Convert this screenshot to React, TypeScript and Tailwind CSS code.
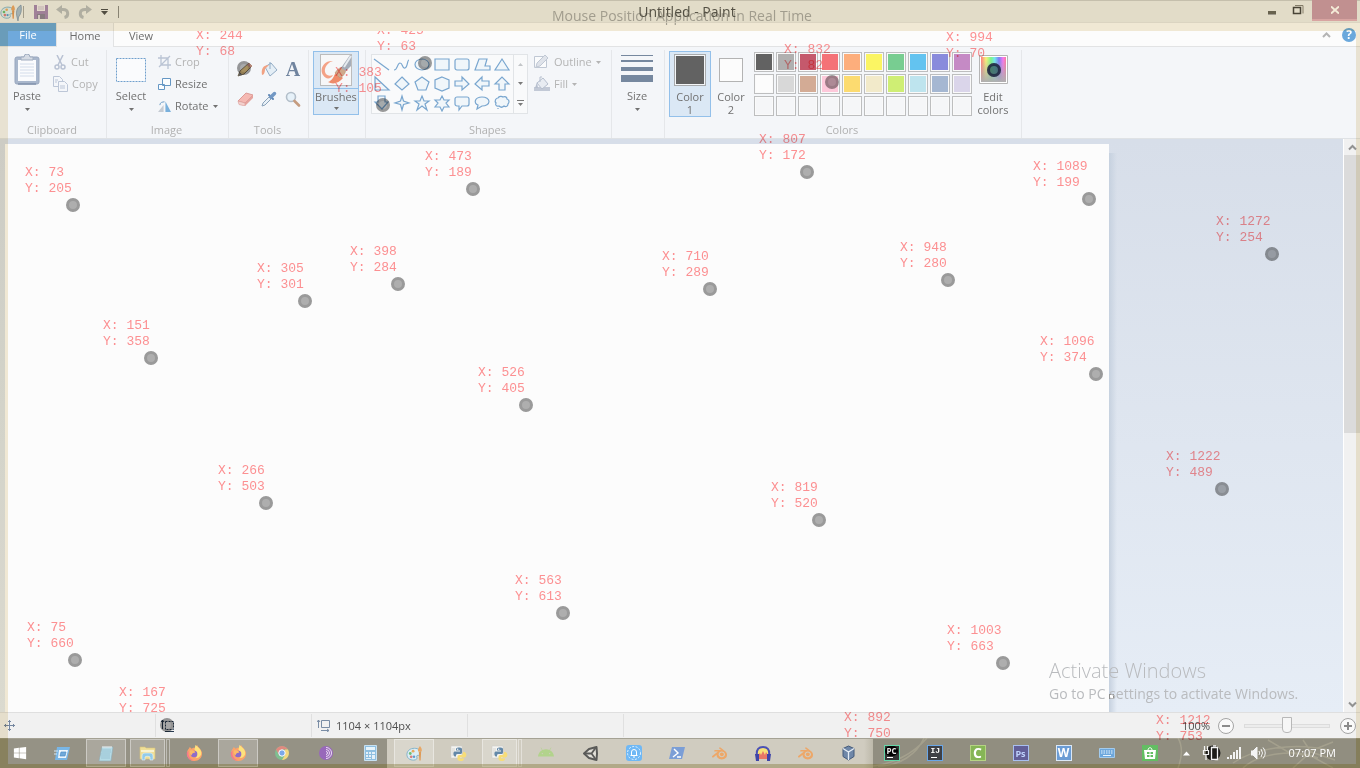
import type { ReactNode } from "react";
import { FaAndroid, FaWindows } from "react-icons/fa";
import { SiBlender } from "react-icons/si";

type Point = { x: number; y: number; dot?: boolean };

const points: Point[] = [
  { x: 244, y: 68 }, { x: 425, y: 63 }, { x: 383, y: 105 }, { x: 832, y: 82 },
  { x: 994, y: 70 }, { x: 73, y: 205 }, { x: 473, y: 189 }, { x: 807, y: 172 },
  { x: 1089, y: 199 }, { x: 1272, y: 254 }, { x: 398, y: 284 }, { x: 305, y: 301 },
  { x: 710, y: 289 }, { x: 948, y: 280 }, { x: 151, y: 358 }, { x: 1096, y: 374 },
  { x: 526, y: 405 }, { x: 1222, y: 489 }, { x: 266, y: 503 }, { x: 819, y: 520 },
  { x: 563, y: 613 }, { x: 75, y: 660 }, { x: 1003, y: 663 }, { x: 167, y: 725 },
  { x: 892, y: 750, dot: false }, { x: 1212, y: 753, dot: false },
];

const TOP = 31;

function Markers() {
  return (
    <div className="pointer-events-none absolute inset-x-0 bottom-0 top-[31px] overflow-hidden mix-blend-multiply">
      {points.map((p) => {
        const chars = 3 + Math.max(String(p.x).length, String(p.y).length);
        return (
          <div key={`${p.x}-${p.y}`}>
            <div
              className="absolute whitespace-pre font-['Liberation_Mono',monospace] text-[13px] leading-4 text-[#ff9294]"
              style={{ left: p.x - chars * 8, top: p.y - 40 - TOP }}
            >
              {`X: ${p.x}\nY: ${p.y}`}
            </div>
            {p.dot !== false && (
              <div
                className="absolute size-[14px] rounded-full border-[3px] border-[#9c9c9c] bg-[#b0b0b0]"
                style={{ left: p.x - 7, top: p.y - 7 - TOP }}
              />
            )}
          </div>
        );
      })}
    </div>
  );
}

function Caret({ className = "" }: { className?: string }) {
  return (
    <svg className={className} width="5" height="3" viewBox="0 0 5 3" fill="currentColor" aria-hidden="true">
      <path d="M0 0h5L2.5 3z" />
    </svg>
  );
}

/* ---------- title bar ---------- */

function PaletteIcon({ size = 18 }: { size?: number }) {
  return (
    <svg width={size} height={size} viewBox="0 0 18 18" aria-hidden="true">
      <path d="M1 10c0-4 3.500-6.500 8-6.500 4 0 6.500 2 6.500 5 0 2-1.500 2.500-3 2.500-1.500 0-1.500 1-1 2 .5 1.500-.5 3-3.500 3C4 16 1 14 1 10z" fill="#dcedf5" stroke="#7fb0c8" />
      <circle cx="4.500" cy="9" r="1.500" fill="#6fbf73" />
      <circle cx="7.500" cy="6.500" r="1.500" fill="#e9aa5d" />
      <circle cx="5.500" cy="12.500" r="1.500" fill="#d98080" />
      <circle cx="8.500" cy="12.500" r="1.300" fill="#5f9bd0" />
      <path d="M13.500 7h2.500l-.5 9.500h-1.300z" fill="#e09a56" />
      <path d="M12.800 7c-.5-2 .3-4 2-6 1.700 2 2.300 4 1.700 6z" fill="#e8a765" />
    </svg>
  );
}

function TitleBar() {
  return (
    <header className="relative flex h-[23px] shrink-0 items-center bg-[#eeefed] shadow-[inset_0_1px_0_#cfd0cc]">
      <div className="flex items-center">
        <div className="flex w-[23px] items-center">
          <PaletteIcon size={16} />
          <svg width="6" height="18" viewBox="0 0 6 18" aria-hidden="true">
            <path d="M5 2C0 5 0 10 1 14l1 4 .6-4c2.500-3 3.400-7 2.400-12z" fill="#a9bfd2" stroke="#6e88a2" strokeWidth=".6" />
          </svg>
        </div>
        <span className="h-3 w-px bg-[#aaa9a4]" />
        <button aria-label="Save" className="ml-[10px] flex w-[14px]">
          <svg width="14" height="14" viewBox="0 0 14 14" aria-hidden="true">
            <path d="M0 0h14v14H0z" fill="#a88bb4" />
            <path d="M3 0h8v6H3z" fill="#f0ecf2" />
            <path d="M4 2h6M4 4h6" stroke="#c9bfd0" />
            <path d="M3 9h8v5H3z" fill="#8f8598" />
            <path d="M4 10h2v4H4z" fill="#ded8e2" />
          </svg>
        </button>
        <button aria-label="Undo" className="ml-2">
          <svg width="14" height="14" viewBox="0 0 14 14" fill="none" aria-hidden="true">
            <path d="M4 4.500h3c6 0 6 7 1.500 8" stroke="#b9bdbf" strokeWidth="3" />
            <path d="M0 4.500L6 0v9z" fill="#b9bdbf" />
          </svg>
        </button>
        <button aria-label="Redo" className="ml-2">
          <svg width="14" height="14" viewBox="0 0 14 14" fill="none" aria-hidden="true">
            <path d="M10 4.500H7c-6 0-6 7-1.500 8" stroke="#b9bdbf" strokeWidth="3" />
            <path d="M14 4.500L8 0v9z" fill="#b9bdbf" />
          </svg>
        </button>
        <button aria-label="Customize Quick Access Toolbar" className="ml-[9px] flex flex-col items-center gap-px text-[#55534d]">
          <span className="h-px w-[7px] bg-[#55534d]" />
          <svg width="7" height="4" viewBox="0 0 7 4" fill="currentColor" aria-hidden="true"><path d="M0 0h7L3.500 4z" /></svg>
        </button>
        <span className="ml-[10px] h-3 w-px bg-[#8f8e88]" />
      </div>
      <div className="pointer-events-none absolute inset-x-0 top-[6px] pl-1 text-center text-[14px] leading-[20px] text-[#a9aaa8]">
        Mouse Position Application in Real Time
      </div>
      <h1 className="pointer-events-none absolute inset-x-0 top-[2px] pl-[14px] text-center text-[14px] leading-[20px] text-[#57564f]">
        Untitled - Paint
      </h1>
      <div className="relative ml-auto flex h-full items-start pr-[3px]">
        <button aria-label="Minimize" className="flex h-4 w-[22px] items-end justify-center pb-[1px]">
          <span className="h-1 w-2 border-b border-[#a8a8a8] bg-[#6d6a5c]" />
        </button>
        <button aria-label="Restore" className="flex h-5 w-[29px] items-center justify-center">
          <svg width="12" height="12" viewBox="0 0 12 12" fill="none" aria-hidden="true">
            <path d="M3 1.500h8v8" stroke="#8b887c" />
            <path d="M1.500 3.500h7v6h-7z" stroke="#4c4a40" strokeWidth="1.500" />
          </svg>
        </button>
        <button aria-label="Close" className="flex h-[21px] w-[45px] items-center justify-center border-b-2 border-[#e3b2bf] bg-[#cb9cab]">
          <svg width="8" height="8" viewBox="0 0 8 8" aria-hidden="true"><path d="M0 .5l8 7M8 .5l-8 7" stroke="#fff" strokeWidth="2" /></svg>
        </button>
      </div>
    </header>
  );
}

function Tabs() {
  return (
    <nav className="flex h-6 shrink-0 items-stretch border-b border-[#e2e3e4] bg-[#fcfcfc] text-[11px] leading-4">
      <button className="w-14 bg-[#6fa9dc] pt-px text-white">File</button>
      <button className="z-10 -mb-px w-[58px] border-x border-[#e2e3e4] bg-[#f6f7f9] pt-[2px] text-[#6c6c6c]">Home</button>
      <button className="w-[54px] pt-[2px] text-[#6c6c6c]">View</button>
      <div className="ml-auto flex items-center gap-[11px] pr-1">
        <button aria-label="Minimize the Ribbon">
          <svg width="9" height="6" viewBox="0 0 9 6" fill="none" aria-hidden="true"><path d="M1 5l3.500-3.500L8 5" stroke="#b4b4b4" strokeWidth="2" /></svg>
        </button>
        <button aria-label="Help" className="size-[14px] rounded-full bg-[#6aa8dc] text-[12px] font-bold leading-[14px] text-white">?</button>
      </div>
    </nav>
  );
}

/* ---------- ribbon ---------- */

function Group({ label, className, children }: { label?: string; className: string; children: ReactNode }) {
  return (
    <section className={`relative flex shrink-0 flex-col border-r border-[#e5e7ea] ${className}`}>
      <div className="flex h-[72px] items-start">{children}</div>
      <div className="pr-[2px] text-center text-[11px] leading-4 text-[#b1b1b1]">{label}</div>
    </section>
  );
}

function PasteIcon() {
  return (
    <svg width="26" height="32" viewBox="0 0 26 32" aria-hidden="true">
      <rect x="1" y="3" width="24" height="27" rx="2" fill="#a9b7cc" stroke="#98a7be" />
      <path d="M4 6h18v21H4z" fill="#fafbfd" />
      <path d="M6 10h14M6 13h14M6 16h14M6 19h14M6 22h14" stroke="#d3dcea" />
      <path d="M7 6V3h3a3 3 0 016 0h3v3z" fill="#d5dbe4" stroke="#9facbf" />
      <path d="M4 30h18" stroke="#8393ad" strokeWidth="1.500" />
    </svg>
  );
}

function BrushIcon() {
  return (
    <svg width="32" height="32" viewBox="0 0 32 32" aria-hidden="true">
      <rect x=".5" y=".5" width="31" height="31" fill="#f7f7f8" stroke="#bcbcbc" />
      <path d="M13 7C4 6-1 15 3 21c3 5 8 4 10 0-5 2-9-1-8-6 1-4 4-7 8-8z" fill="#f4a286" />
      <path d="M8 28c4-1 6-6 8-10l7 6c-4 5-10 7-15 4z" fill="#ee8b6a" />
      <path d="M15 19c3-5 7-7 10-5 2 3-1 8-5 10z" fill="#cfa98b" stroke="#b58f73" strokeWidth=".5" />
      <path d="M21 14L30 1h1v11l-5 5z" fill="#a5adb9" />
      <path d="M24 13l7-11" stroke="#e7ebf0" strokeWidth="2" />
    </svg>
  );
}

const shapePaths = [
  "M1 3l15 11",
  "M1 14C5 14 4 7 7 7s2 6 5 5 2-8 4-8",
  "M9 3c4 0 7 2.500 7 5.500S13 14 9 14s-7-2.500-7-5.500S5 3 9 3z",
  "M2 3h14v11H2z",
  "M4 3h10a2 2 0 012 2v7a2 2 0 01-2 2H4a2 2 0 01-2-2V5a2 2 0 012-2z",
  "M6 3h8l-2 7h5v4H2z",
  "M9 3l7 11H2z",
  "M2 2v13h14z",
  "M9 2l7 7-7 6-7-6z",
  "M9 2l7 5-3 8H5L2 7z",
  "M9 2l7 3v8l-7 3-7-3V5z",
  "M2 6h7V2l7 7-7 6v-4H2z",
  "M16 6H9V2L2 9l7 6v-4h7z",
  "M6 15V9H2l7-7 7 7h-4v6z",
  "M5 2v6H2l7 7 6-7h-3V2z",
  "M9 2l1.500 5L16 9l-5.500 1.500L9 16l-1.500-5.500L2 9l5.500-2z",
  "M9 2l2 5h5l-4 3 2 6-5-4-5 4 2-6-4-3h5z",
  "M9 2l2 4h5l-3 3 3 4h-5l-2 4-2-4H2l3-4-3-3h5z",
  "M4 3h10a2 2 0 012 2v5a2 2 0 01-2 2H9l-3 4v-4H4a2 2 0 01-2-2V5a2 2 0 012-2z",
  "M9 3c4 0 7 2 7 4.500S13 12 9 12l-5 3 1-4C0 9 2 3 9 3z",
  "M5 4c1-2 4-2 5-1 2-1 4 0 4 2 3 1 2 4 1 5 0 3-3 3-4 2-2 2-4 1-5 0-3 1-4-2-3-3-2-2 0-5 2-5zM5 14v1",
];

const paletteTop = ["#626262", "#b0b0b0", "#c5596c", "#f47277", "#fdae7c", "#fbf563", "#78cd91", "#63c3f0", "#898bdc", "#c58ac5"];
const paletteBottom = ["#fcfcfc", "#d8d8d8", "#d3ab95", "#fdc8da", "#fcdb70", "#f2eaca", "#cfee74", "#bee4ee", "#a5b7d2", "#dad5ea"];
const paletteCells = [...paletteTop, ...paletteBottom, ...Array<string>(10).fill("#f5f6f8")];

const disabled = "text-[#b4b4b4]";

function Ribbon() {
  return (
    <div className="flex h-[92px] shrink-0 border-b border-[#dfe2e5] bg-[#f4f6f9] pt-[3px] text-[12px] leading-4 text-[#717171]">
      <Group label="Clipboard" className="w-[107px]">
        <button className="ml-[13px] mt-1 flex w-7 flex-col items-center text-[11px]">
          <PasteIcon />
          <span className="mt-[2px]">Paste</span>
          <Caret className="mt-1" />
        </button>
        <div className={`ml-3 mt-1 flex flex-col gap-[6px] text-[11px] ${disabled}`}>
          <button className="flex items-center gap-1">
            <svg width="14" height="15" viewBox="0 0 14 15" fill="none" stroke="#b9c2d3" strokeWidth="1.500" aria-hidden="true">
              <path d="M4 0l5 10M10 0L5 10" /><circle cx="4" cy="12" r="2" /><circle cx="10" cy="12" r="2" />
            </svg>
            Cut
          </button>
          <button className="flex items-center gap-1">
            <svg width="15" height="16" viewBox="0 0 15 16" fill="#f4f6fa" stroke="#bcc6d7" aria-hidden="true">
              <path d="M.5.500h6l3 3v7h-9z" /><path d="M5.500 5.500h6l3 3v7h-9z" /><path d="M7 10h5M7 12h5M2 4h3M2 6h2" />
            </svg>
            Copy
          </button>
        </div>
      </Group>

      <Group label="Image" className="w-[122px]">
        <button className="ml-2 mt-2 flex w-8 flex-col items-center text-[11px]">
          <svg width="30" height="24" viewBox="0 0 30 24" aria-hidden="true">
            <rect x=".5" y=".5" width="29" height="23" fill="#fafbfd" stroke="#6f9fcd" strokeDasharray="2 1" />
          </svg>
          <span className="mt-[6px]">Select</span>
          <Caret className="mt-1" />
        </button>
        <div className="ml-[11px] mt-1 flex flex-col gap-[6px] text-[11px]">
          <button className={`flex items-center gap-1 ${disabled}`}>
            <svg width="13" height="14" viewBox="0 0 13 14" fill="none" stroke="#bac4d4" strokeWidth="1.300" aria-hidden="true">
              <path d="M3 0v10h10M0 3h10v11M1 12L12 1" />
            </svg>
            Crop
          </button>
          <button className="flex items-center gap-1">
            <svg width="13" height="12" viewBox="0 0 13 12" fill="#fbfdff" stroke="#6597c4" aria-hidden="true">
              <path d="M4.500.500h8v7h-8zM.5 6.500h6v5h-6z" />
            </svg>
            Resize
          </button>
          <button className="flex items-center gap-1">
            <svg width="13" height="13" viewBox="0 0 14 13" aria-hidden="true">
              <path d="M0 12.500h6V5z" fill="#c5cbd3" /><path d="M8 1v11.500h6z" fill="#79b0dc" /><path d="M2 5c0-3 3-3.500 5-3.500" fill="none" stroke="#6597c4" />
            </svg>
            Rotate
            <Caret />
          </button>
        </div>
      </Group>

      <Group label="Tools" className="w-[80px]">
        <div className="ml-1 mt-[7px] grid grid-cols-3 gap-y-[6px]">
          <button aria-label="Pencil" className="flex size-6 items-center justify-center">
            <svg width="16" height="16" viewBox="0 0 16 16" aria-hidden="true"><path d="M1 15l2-5 9-8 3 3-8 8z" fill="#f1cf89" stroke="#8b7a5c" /><path d="M1 15l1.500-4 3 3z" fill="#5d5d5d" /><path d="M12 2l3 3-2 2-3-3z" fill="#e0a298" /></svg>
          </button>
          <button aria-label="Fill with color" className="flex size-6 items-center justify-center">
            <svg width="17" height="16" viewBox="0 0 17 16" aria-hidden="true"><path d="M4 6l6-4 6 7-7 6z" fill="#e4eef6" stroke="#92acc5" /><path d="M9 1v7" stroke="#92acc5" /><path d="M8 4C2 4 0 8 1 14c2 0 3-3 3-6z" fill="#f1a283" /></svg>
          </button>
          <button aria-label="Text" className="size-6 font-['Liberation_Serif',serif] text-[20px] font-bold leading-6 text-[#70849f]">A</button>
          <button aria-label="Eraser" className="flex size-6 items-center justify-center">
            <svg width="17" height="14" viewBox="0 0 17 14" aria-hidden="true"><path d="M1 9l8-8 7 2-8 8z" fill="#f5b9b3" stroke="#dc9b97" /><path d="M1 9l7 2v3l-6-1.500z" fill="#f3d1cd" stroke="#dc9b97" strokeWidth=".6" /><path d="M8 11l8-8v3l-8 8z" fill="#e5a39e" /></svg>
          </button>
          <button aria-label="Color picker" className="flex size-6 items-center justify-center">
            <svg width="16" height="16" viewBox="0 0 16 16" aria-hidden="true"><path d="M1 15l1-3 6-6 2 2-6 6z" fill="#e8f0f7" stroke="#8ba3ba" /><path d="M8 4l4 4" stroke="#5d86b4" strokeWidth="2" strokeLinecap="round" /><path d="M10 6l3.500-3.500" stroke="#7298c4" strokeWidth="3.500" strokeLinecap="round" /></svg>
          </button>
          <button aria-label="Magnifier" className="flex size-6 items-center justify-center">
            <svg width="16" height="16" viewBox="0 0 16 16" aria-hidden="true"><circle cx="6" cy="6" r="4.500" fill="#e6f1f9" stroke="#b3bfca" strokeWidth="1.600" /><path d="M9.500 10l4.500 4.500" stroke="#c59c80" strokeWidth="2.600" strokeLinecap="round" /></svg>
          </button>
        </div>
      </Group>

      <Group className="w-[57px]">
        <button className="ml-1 mt-px flex h-[64px] w-[46px] flex-col items-center border border-[#93c0ea] bg-[#dbe8f5] pt-[2px] text-[11px]">
          <BrushIcon />
          <span className="mt-[2px] w-full border-t border-[#93c0ea]">Brushes</span>
          <Caret className="mt-[2px]" />
        </button>
      </Group>

      <Group label="Shapes" className="w-[246px]">
        <div className="ml-[5px] mt-1 flex h-[60px] border border-[#e1e4e7] bg-[#f9fafb]">
          <div className="grid grid-cols-7">
            {shapePaths.map((d, i) => (
              <button key={i} aria-label={`Shape ${i + 1}`} className="flex h-[19px] w-5 items-center justify-center">
                <svg width="18" height="18" viewBox="0 0 18 18" fill={i < 2 ? "none" : "#f0f6fa"} stroke="#79a6cf" strokeWidth="1.200" aria-hidden="true"><path d={d} /></svg>
              </button>
            ))}
          </div>
          <div className="ml-[1px] flex w-[14px] flex-col border-l border-[#e1e4e7] text-[#7a7a7a]">
            <button aria-label="Scroll up" className="flex flex-1 items-center justify-center text-[#c2c5c8]"><Caret className="rotate-180" /></button>
            <button aria-label="Scroll down" className="flex flex-1 items-center justify-center"><Caret /></button>
            <button aria-label="More shapes" className="flex flex-1 flex-col items-center justify-center gap-[2px]"><span className="h-px w-[7px] bg-[#7a7a7a]" /><Caret /></button>
          </div>
        </div>
        <div className={`ml-[6px] mt-1 flex flex-col gap-[6px] text-[11px] ${disabled}`}>
          <button className="flex items-center gap-1">
            <svg width="16" height="14" viewBox="0 0 16 14" fill="#fafbfc" stroke="#c0c8d4" aria-hidden="true"><path d="M.5 1.500h12v11H.5z" /><path d="M2 12l1-4 8-8 3 3-8 8z" fill="#dfe3ea" /></svg>
            Outline
            <Caret />
          </button>
          <button className="flex items-center gap-1">
            <svg width="16" height="16" viewBox="0 0 16 16" aria-hidden="true"><path d="M0 11h16v4H0z" fill="#c2c9d6" /><path d="M3 7l6-5 5 6-6 5z" fill="#e8ecf2" stroke="#b6bfce" /><path d="M6 6V1h2" fill="none" stroke="#b6bfce" /><path d="M3 6l-2 6h3z" fill="#b6bfce" /></svg>
            Fill
            <Caret />
          </button>
        </div>
      </Group>

      <Group className="w-[53px]">
        <button className="ml-[9px] mt-[5px] flex w-8 flex-col items-center text-[11px]">
          <svg width="32" height="28" viewBox="0 0 32 28" fill="#76889f" aria-hidden="true"><path d="M0 0h32v1H0zM0 5h32v2H0zM0 12h32v4H0zM0 20h32v7H0z" /></svg>
          <span className="mt-[5px]">Size</span>
          <Caret className="mt-1" />
        </button>
      </Group>

      <Group label="Colors" className="w-[357px]">
        <button className="ml-1 mt-px flex h-[66px] w-[42px] flex-col items-center border border-[#93c0ea] bg-[#dbe8f5] pt-[2px] text-[11px] leading-[13px]">
          <span className="mb-1 size-8 shrink-0 border border-[#a9abad] bg-[#626262] shadow-[inset_0_0_0_1px_#f4f6f8]" />
          <span>Color<br />1</span>
        </button>
        <button className="mt-2 flex w-10 flex-col items-center text-[11px] leading-[13px]">
          <span className="mb-2 size-6 border border-[#b3b3b3] bg-[#fcfcfc]" />
          <span>Color<br />2</span>
        </button>
        <div className="ml-[3px] mt-[2px] grid grid-cols-10 gap-[2px]">
          {paletteCells.map((c, i) => (
            <button
              key={i}
              aria-label={`Color ${i + 1}`}
              className="size-5 border border-[#bdbebf] shadow-[inset_0_0_0_1px_#fafafa]"
              style={{ backgroundColor: c }}
            />
          ))}
        </div>
        <button className="ml-[5px] mt-[5px] flex w-8 flex-col items-center text-[11px] leading-[13px]">
          <svg width="29" height="29" viewBox="0 0 29 29" className="mb-[6px]" aria-hidden="true">
            <defs>
              <linearGradient id="spectrum">
                <stop offset="0" stopColor="#ff7d7d" /><stop offset=".2" stopColor="#f5f07c" /><stop offset=".4" stopColor="#7df58a" />
                <stop offset=".55" stopColor="#74e6f0" /><stop offset=".72" stopColor="#7b7df5" /><stop offset=".88" stopColor="#f57bf0" /><stop offset="1" stopColor="#fa7c9c" />
              </linearGradient>
              <linearGradient id="fade" x2="0" y2="1"><stop offset=".1" stopColor="#aaa" stopOpacity="0" /><stop offset="1" stopColor="#b0b0b0" /></linearGradient>
            </defs>
            <path d="M.5.500h28v28H.5z" fill="#fff" stroke="#b5b5b5" />
            <path d="M2 2h25v25H2z" fill="url(#spectrum)" />
            <path d="M2 2h25v25H2z" fill="url(#fade)" />
            <circle cx="15" cy="15" r="5.500" fill="#4a9a9b" fillOpacity=".6" stroke="#2c3468" strokeWidth="3" strokeOpacity=".75" />
          </svg>
          <span>Edit<br />colors</span>
        </button>
      </Group>
    </div>
  );
}

/* ---------- workspace ---------- */

function Chevron({ up = false }: { up?: boolean }) {
  return (
    <svg width="9" height="7" viewBox="0 0 9 7" fill="none" aria-hidden="true">
      <path d={up ? "M1 5.500L4.500 2 8 5.500" : "M1 1.500L4.500 5 8 1.500"} stroke="#929292" strokeWidth="2" />
    </svg>
  );
}

function Workspace() {
  return (
    <main className="flex min-h-0 flex-1 bg-[#f1f1f1]">
      <div className="flex min-w-0 flex-1 bg-linear-to-b from-[#d7dee9] to-[#e6edf6] pl-[5px] pt-[5px]">
        <div className="relative w-[1104px] shrink-0 bg-[#fcfcfc]">
          <span className="absolute -right-[5px] bottom-[13px] z-10 size-[5px] border border-[#8c8c8c] bg-white" />
        </div>
        <div className="mt-[9px] w-2 shrink-0 bg-linear-to-r from-[#c6d1df] to-[#dae1ec]/0" />
      </div>
      <div className="flex w-[17px] shrink-0 flex-col border-l border-white bg-[#f1f1f1]">
        <button aria-label="Scroll up" className="flex h-4 items-center justify-center"><Chevron up /></button>
        <div className="h-[278px] bg-[#dbdbdb]" />
        <button aria-label="Scroll down" className="mt-auto flex h-4 items-center justify-center"><Chevron /></button>
      </div>
    </main>
  );
}

function StatusBar() {
  return (
    <footer className="flex h-[26px] shrink-0 items-stretch border-t border-[#dfdfdf] bg-[#f1f1f1] py-px text-[12px] leading-4 text-[#4f4f4f]">
      <div className="flex w-[156px] items-center border-r border-[#e0e0e0] pl-1">
        <svg width="11" height="11" viewBox="0 0 11 11" fill="none" stroke="#7587a0" aria-hidden="true">
          <path d="M5.500 0v11M0 5.500h11M4 2l1.500-1.500L7 2M4 9l1.500 1.500L7 9M2 4L.5 5.500 2 7M9 4l1.500 1.500L9 7" />
        </svg>
      </div>
      <div className="flex w-[156px] items-center border-r border-[#e0e0e0] pl-1">
        <svg width="15" height="14" viewBox="0 0 15 14" fill="none" stroke="#26394f" aria-hidden="true">
          <path d="M2.500 1v9M1 3l1.500-2L4 3" /><path d="M5.500 2.500h8v8h-8z" strokeDasharray="2 1" /><path d="M5 12.500h9" />
        </svg>
      </div>
      <div className="flex w-[156px] items-center gap-[6px] border-r border-[#e0e0e0] pl-[5px]">
        <svg width="13" height="13" viewBox="0 0 13 13" fill="none" stroke="#7a8da5" aria-hidden="true">
          <path d="M1.500 1v8M0 3l1.500-2L3 3M4.500 1.500h8v7h-8zM4 11.500h8M10 10l2 1.500-2 1.500" />
        </svg>
        <span className="text-[11px]">1104 × 1104px</span>
      </div>
      <div className="w-[156px] border-r border-[#e0e0e0]" />
      <div className="ml-auto flex items-center pr-1">
        <span className="text-[11px]">100%</span>
        <button aria-label="Zoom out" className="ml-2 flex size-4 items-center justify-center rounded-full border border-[#a5a5a5] bg-[#fafafa]">
          <span className="h-[2px] w-2 bg-[#8c8c8c]" />
        </button>
        <input
          type="range"
          aria-label="Zoom"
          defaultValue={50}
          className="mx-[10px] h-4 w-[86px] appearance-none bg-transparent [&::-webkit-slider-runnable-track]:h-1 [&::-webkit-slider-runnable-track]:border [&::-webkit-slider-runnable-track]:border-[#dcdcdc] [&::-webkit-slider-runnable-track]:bg-[#ececec] [&::-webkit-slider-thumb]:-mt-[8px] [&::-webkit-slider-thumb]:h-4 [&::-webkit-slider-thumb]:w-[10px] [&::-webkit-slider-thumb]:appearance-none [&::-webkit-slider-thumb]:rounded-b-[4px] [&::-webkit-slider-thumb]:border [&::-webkit-slider-thumb]:border-[#b8b8b8] [&::-webkit-slider-thumb]:bg-[#f6f6f6]"
        />
        <button aria-label="Zoom in" className="flex size-4 items-center justify-center rounded-full border border-[#a5a5a5] bg-[#fafafa]">
          <svg width="8" height="8" viewBox="0 0 8 8" aria-hidden="true"><path d="M4 0v8M0 4h8" stroke="#8c8c8c" strokeWidth="2" /></svg>
        </button>
      </div>
    </footer>
  );
}

/* ---------- taskbar ---------- */

function Firefox() {
  return (
    <svg width="17" height="17" viewBox="0 0 18 18" aria-hidden="true">
      <path d="M3 4l1-2 2 2c1-1 2-1 4-1 0-1 1-2 2-3 0 2 4 4 5 8 .5 6-4 9-8 9-5 0-8-4-8-8 0-2 1-4 2-5z" fill="#fba36b" />
      <path d="M10 0c4 3 7 6 6 10-1 3-4 4-6 4 3-3 2-6-1-9l1-5z" fill="#fde27d" />
      <path d="M3 6c-2 5 2 10 6 10-5 2-9-4-8-8z" fill="#f6788c" />
      <circle cx="8.500" cy="9.500" r="3.500" fill="#8f6cc9" />
      <path d="M4 6c3-1 5 0 6 2-2 0-4 1-4 3-2-1-2-3-2-5z" fill="#fdbb66" />
    </svg>
  );
}

function Python() {
  return (
    <svg width="17" height="17" viewBox="0 0 17 17" aria-hidden="true">
      <path d="M1 1h11v12H1z" fill="#f4f4f1" stroke="#cfcfca" strokeWidth=".6" />
      <path d="M2 4h3M2 6h3M2 8h2M2 10h2" stroke="#d5d5d2" />
      <path d="M6 3.500c1-1.500 5-1.500 6 0v4c0 1-1 1.500-2 1.500H7.500C6 9 6 10 6 11.500H4.500C3 10 3 7 4.500 6.500H10V5.500H6z" fill="#6388a8" />
      <path d="M13 7h1.500c2.500 1 2.500 5 0 5.500H10v1h4v1c-1 2-5 2-6.500 0v-3c0-1 1-1.500 2-1.500H11c1.500 0 2-1 2-3z" fill="#f7dd78" />
      <circle cx="7.700" cy="4.200" r=".7" fill="#fff" />
    </svg>
  );
}

function Blender() {
  return <SiBlender size={15} className="text-[#eda768]" aria-hidden="true" />;
}

function Tile({ text, className }: { text: string; className: string }) {
  return <span className={`flex size-4 items-center justify-center border text-[9px] font-bold leading-none ${className}`}>{text}</span>;
}

type App = { name: string; icon: ReactNode; open?: boolean; stacked?: boolean };

const wideApps: App[] = [
  { name: "Run", icon: <svg width="17" height="13" viewBox="0 0 17 13" aria-hidden="true"><path d="M3 0h13l-3 13H1z" fill="#79b6e6" /><path d="M5 3h9l-2 8H4z" fill="#eef6fc" /><path d="M7 5h5l-1 4H6z" fill="#6fa9da" stroke="#4d8dc4" strokeWidth=".7" /><path d="M0 4h4M0 7h3" stroke="#d4e8f8" /></svg> },
  { name: "Notepad", open: true, icon: <svg width="16" height="17" viewBox="0 0 16 17" aria-hidden="true"><path d="M4 2h11l-2 14H1z" fill="#b5dbe6" stroke="#8dabb5" strokeWidth=".6" /><path d="M4 5h9M4 7h9M3 9h9M3 11h9M3 13h9" stroke="#8fbccb" strokeWidth=".7" /><path d="M5 1v2M7 1v2M9 1v2M11 1v2M13 1v2" stroke="#f4f4f4" /></svg> },
  { name: "File Explorer", open: true, stacked: true, icon: <svg width="17" height="16" viewBox="0 0 17 16" aria-hidden="true"><path d="M1 2h5l1 1h9v11H1z" fill="#efdf98" stroke="#d6c47a" strokeWidth=".6" /><path d="M2 5h13v2H2z" fill="#faf3cf" /><path d="M3 15v-4c0-2 1-3 3-3h5c2 0 3 1 3 3v4h-3v-3c0-1-5-1-5 0v3z" fill="#92cbe9" stroke="#e7f4fa" strokeWidth=".6" /></svg> },
  { name: "Firefox", icon: <Firefox /> },
  { name: "Firefox window", open: true, icon: <Firefox /> },
  { name: "Chrome", icon: <svg width="14" height="14" viewBox="0 0 14 14" aria-hidden="true"><circle cx="7" cy="7" r="7" fill="#7fbf90" /><path d="M1 3.500A7 7 0 0113 3.500H7L4 9z" fill="#e08a80" /><path d="M13 3.500A7 7 0 017 14l3-5V3.500z" fill="#f5d77f" /><circle cx="7" cy="7" r="3.200" fill="#7ba8ea" stroke="#fff" /></svg> },
  { name: "Tor Browser", icon: <svg width="14" height="14" viewBox="0 0 14 14" fill="none" aria-hidden="true"><circle cx="7" cy="7" r="7" fill="#9868ba" /><path d="M7 1.500a5.500 5.500 0 010 11M7 3.500a3.500 3.500 0 010 7M7 5.500a1.500 1.500 0 010 3" stroke="#ecdff2" /></svg> },
  { name: "Calculator", icon: <svg width="13" height="16" viewBox="0 0 13 16" aria-hidden="true"><path d="M.5.500h12v15H.5z" fill="#8fbfe0" stroke="#c7e1f1" /><path d="M2 2h9v3H2z" fill="#e7f4fb" /><path d="M2 7h2v2H2zM5 7h2v2H5zM8 7h3v2H8zM2 10h2v2H2zM5 10h2v2H5zM8 10h3v4H8zM2 13h5v1H2z" fill="#e4f0f8" /></svg> },
  { name: "Paint", open: true, icon: <PaletteIcon size={17} /> },
  { name: "Python", icon: <Python /> },
  { name: "Python windows", open: true, stacked: true, icon: <Python /> },
  { name: "Android", icon: <FaAndroid size={16} className="text-[#b2d38c]" aria-hidden="true" /> },
  { name: "Unity", icon: <svg width="15" height="15" viewBox="0 0 15 15" fill="none" aria-hidden="true"><path d="M1 7.500L6 3l7.500-2L14 7.500 13.500 14 6 12z" fill="#e3e1da" stroke="#5a5a58" strokeWidth="2" strokeLinejoin="round" /><path d="M2 7.500h6.500L12.500 2M8.500 7.500l4 5.500" stroke="#5a5a58" strokeWidth="1.800" /></svg> },
];

const apps: App[] = [
  { name: "Alarm", icon: <svg width="16" height="16" viewBox="0 0 16 16" fill="none" stroke="#fff" aria-hidden="true"><rect width="16" height="16" rx="3" fill="#6fb8f5" stroke="none" /><path d="M5.500 10.500V7a2.500 2.500 0 015 0v3.500zM4.500 10.500h7M7 12h2" /><circle cx="8" cy="8" r="6.500" strokeDasharray="2 1.500" strokeWidth=".8" /></svg> },
  { name: "PowerShell", icon: <svg width="16" height="12" viewBox="0 0 16 12" fill="none" aria-hidden="true"><path d="M3 0h13l-3 12H0z" fill="#7b9ed6" /><path d="M5 2l4 4-5 4M8 10h4" stroke="#fff" strokeWidth="1.400" /></svg> },
  { name: "Blender", icon: <Blender /> },
  { name: "Audacity", icon: <svg width="16" height="15" viewBox="0 0 16 15" aria-hidden="true"><path d="M2 10C1 3 4 1 8 1s7 2 6 9" fill="#f7e278" stroke="#4b51b5" strokeWidth="2" /><path d="M3 9l2-2 1 2 2-4 2 4 1-3 2 3v4H3z" fill="#e87866" /><path d="M0 8h4v7H1zM12 8h4l-1 7h-3z" fill="#3f45a8" /></svg> },
  { name: "Blender 2", icon: <Blender /> },
  { name: "VirtualBox", icon: <svg width="13" height="16" viewBox="0 0 13 16" aria-hidden="true"><path d="M6.500 1L12 3.500v8L6.500 15 1 11.500v-8z" fill="#6f87a8" stroke="#445a7a" /><path d="M1 3.500L6.500 7 12 3.500M6.500 7v8" stroke="#e6edf5" fill="none" strokeWidth="1.300" /></svg> },
  { name: "PyCharm", icon: <span className="flex size-4 flex-col items-center border border-[#65d6a8] bg-[#343434] text-[8px] font-bold leading-[10px] text-[#e8e8e8]"><span className="rounded-full bg-black px-px">PC</span><span className="mr-1 mt-px h-px w-[6px] bg-white" /></span> },
  { name: "IntelliJ IDEA", icon: <span className="flex size-4 flex-col items-start border border-[#69a6e8] bg-[#3e4046] px-[3px] font-['Liberation_Mono',monospace] text-[8px] font-bold leading-[10px] text-white"><span>IJ</span><span className="mt-px h-px w-[6px] bg-white" /></span> },
  { name: "Camtasia", icon: <Tile text="C" className="border-[#b5d383] bg-[#86b556] text-[14px] text-white" /> },
  { name: "Photoshop", icon: <Tile text="Ps" className="border-[#a8bff0] bg-[#625f98] text-[#bed2fb]" /> },
  { name: "Word", icon: <Tile text="W" className="border-[#dbe8f6] bg-[#6b9cd4] text-[12px] text-white" /> },
  { name: "On-Screen Keyboard", icon: <svg width="16" height="10" viewBox="0 0 16 10" aria-hidden="true"><path d="M.5.500h15v9H.5z" fill="#6da7dc" stroke="#a3cbed" /><path d="M2 3h12M2 5h12" stroke="#e8f4fd" strokeDasharray="1.500 1" /><path d="M4 7.500h8" stroke="#e8f4fd" /></svg> },
  { name: "Store", icon: <span className="flex size-4 items-center justify-center bg-[#63bd63] text-white"><svg width="12" height="12" viewBox="0 0 12 12" aria-hidden="true"><path d="M0 3h12l-1 9H1z" fill="#fff" /><path d="M4 3c0-3 4-3 4 0" stroke="#fff" fill="none" /><path d="M3 5h2.500v2H3zM6.500 5H9v2H6.500zM3 8h2.500v2H3zM6.500 8H9v2H6.500z" fill="#63bd63" /></svg></span> },
];

function TaskButton({ app, className }: { app: App; className: string }) {
  return (
    <button aria-label={app.name} className={`flex h-full shrink-0 items-center justify-center px-[2px] py-px ${className}`}>
      <span
        className={`flex h-full w-full items-center justify-center ${app.open ? "border border-white/40 bg-white/20" : ""} ${app.stacked ? "mr-[3px]" : ""}`}
      >
        {app.icon}
      </span>
      {app.stacked && <span className="-ml-[2px] h-full w-1 shrink-0 border border-white/40" />}
    </button>
  );
}

function Taskbar() {
  return (
    <div className="relative flex h-[30px] shrink-0 items-stretch bg-[linear-gradient(90deg,#959285_387px,#d0ccc0_387px,#d0ccc0_864px,#bdb9aa_873px,#918e80_873px)] shadow-[inset_0_1px_0_#a5a294]">
      <svg className="absolute right-0 top-0" width="487" height="30" viewBox="0 0 487 30" fill="none" aria-hidden="true">
        <path d="M0 28C20 26 40 16 54 0M5 28c22 0 39-12 46-28M305 0c5 8 4 20 0 30M360 25c20-14 60-22 100-12M370 30c15-14 50-20 75-10M395 2l20 12 25 5 20 11M420 30l20-18 20-8M430 2l8 12 24 8" stroke="#c8c3a7" strokeOpacity=".35" strokeWidth="1.500" />
      </svg>
      <div className="pointer-events-none absolute inset-0 border-b-4 border-l-8 border-r-4 border-[#6b5808]/30" />
      <button aria-label="Start" className="flex w-10 shrink-0 items-center justify-center text-white">
        <FaWindows size={14} aria-hidden="true" />
      </button>
      {wideApps.map((a) => <TaskButton key={a.name} app={a} className="w-11" />)}
      {apps.map((a) => <TaskButton key={a.name} app={a} className="relative w-[43px]" />)}
      <div className="relative ml-auto flex shrink-0 items-center pr-6 text-white">
        <button aria-label="Show hidden icons"><Caret className="mr-3 size-[7px] rotate-180" /></button>
        <svg className="mr-[5px]" width="20" height="18" viewBox="0 0 20 18" fill="none" stroke="#f2f2f2" aria-hidden="true">
          <circle cx="11" cy="9" r="7.500" fill="#1c1b18" stroke="none" />
          <path d="M2.500 2v4M5.500 2v4M1.500 6.500h5v4h-5zM4 11v5" strokeWidth="1.200" />
          <path d="M9.500 3.500h6v12h-6zM11 1.800h3" fill="#1c1b18" strokeWidth="1.300" />
        </svg>
        <svg className="mr-[9px]" width="15" height="12" viewBox="0 0 15 12" fill="#f4f4f4" aria-hidden="true">
          <path d="M0 10h2v2H0zM3 8h2v4H3zM6 5h2v7H6zM9 3h2v9H9zM12 0h2v12h-2z" />
        </svg>
        <svg className="mr-[23px]" width="15" height="14" viewBox="0 0 15 14" fill="none" stroke="#f4f4f4" aria-hidden="true">
          <path d="M0 5h2l4-4v12L2 9H0z" fill="#f4f4f4" /><path d="M8 5q1.500 2 0 4M10 3q3 4 0 8M12 1.500q4.500 5.500 0 11" />
        </svg>
        <time className="text-[11px] leading-4">07:07 PM</time>
      </div>
    </div>
  );
}

export default function App() {
  return (
    <div className="relative flex h-screen flex-col overflow-hidden bg-[#f1f1f1] font-['Open_Sans','Noto_Sans',sans-serif]">
      <div className="relative isolate flex min-h-0 flex-1 flex-col">
        <TitleBar />
        <Tabs />
        <Ribbon />
        <Workspace />
        <StatusBar />
        <div className="pointer-events-none absolute inset-0 z-20 border-l-8 border-r-4 border-t-[31px] border-[#f3ebd7] mix-blend-multiply" />
        <div className="pointer-events-none absolute inset-x-0 top-[22px] z-20 h-px bg-[#d8d0bd]/70" />
      </div>
      <Taskbar />
      <Markers />
      <aside className="pointer-events-none absolute bottom-[64px] right-[52px] w-[259px] whitespace-nowrap text-[#b9bbbe]">
        <p className="text-[20px] font-light leading-[26px]">Activate Windows</p>
        <p className="text-[14px] leading-[20px]">Go to PC settings to activate Windows.</p>
      </aside>
    </div>
  );
}
